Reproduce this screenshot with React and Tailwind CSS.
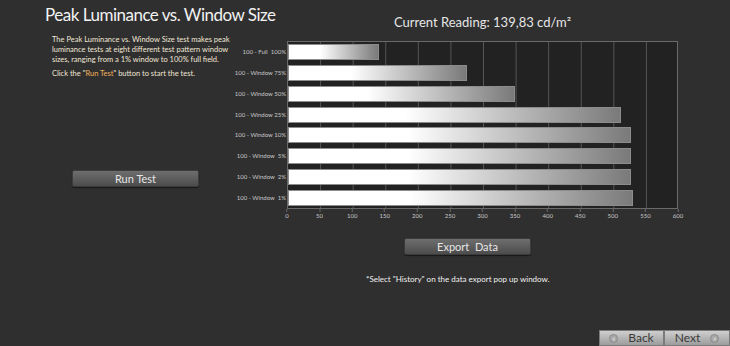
import React from 'react'

const rows = [
  { label: '100 - Full  100%', value: 139.83 },
  { label: '100 - Window 75%', value: 275 },
  { label: '100 - Window 50%', value: 349 },
  { label: '100 - Window 25%', value: 511 },
  { label: '100 - Window 10%', value: 526 },
  { label: '100 - Window  5%', value: 527 },
  { label: '100 - Window  2%', value: 526 },
  { label: '100 - Window  1%', value: 529 },
]

const ticks = [0, 50, 100, 150, 200, 250, 300, 350, 400, 450, 500, 550, 600]

const PLOT_W = 391

const Chart = () => (
  <div className="flex flex-col">
    <div className="flex">
      <div className="w-[47px] h-[167px] flex flex-col">
        {rows.map((r) => (
          <div key={r.label} className="flex-1 flex items-center justify-end whitespace-pre text-[6px] text-[#c8c8c8] pr-[1px]">
            {r.label}
          </div>
        ))}
      </div>
      <div className="relative w-[391px] h-[167px] bg-[#222222] border-l border-t border-r border-[#6a6a6a]">
        <svg className="absolute inset-0" width={PLOT_W} height={167}>
          {ticks.slice(1, -1).map((t) => (
            <line key={t} x1={(t / 600) * PLOT_W} x2={(t / 600) * PLOT_W} y1={0} y2={167} stroke="#555" strokeWidth="1" />
          ))}
        </svg>
        <div className="relative h-full flex flex-col">
          {rows.map((r) => (
            <div key={r.label} className="flex-1 flex items-center">
              <div
                className="h-[16px] border border-[#8c8c8c] bg-[linear-gradient(to_right,#ffffff_35%,#7a7a7a_100%)]"
                style={{ width: (r.value / 600) * PLOT_W }}
              />
            </div>
          ))}
        </div>
      </div>
    </div>
    <div className="flex">
      <div className="w-[47px]" />
      <div className="relative w-[391px] h-[14px] border-t border-[#6a6a6a]">
        {ticks.map((t) => (
          <div
            key={t}
            className="absolute top-0 flex flex-col items-center -translate-x-1/2"
            style={{ left: (t / 600) * PLOT_W }}
          >
            <div className="w-px h-[3px] bg-[#6a6a6a]" />
            <span className="text-[6px] leading-[8px] text-[#c8c8c8]">{t}</span>
          </div>
        ))}
      </div>
    </div>
  </div>
)

const GrayButton = ({ children, className }) => (
  <button className={`h-[17px] rounded-[2px] border border-[#3c3c3c] bg-[linear-gradient(to_bottom,#6e6e6e,#4c4c4c)] text-[#e6e6e6] text-[11px] leading-none shadow-[0_1px_1px_rgba(0,0,0,0.5)] ${className}`}>
    {children}
  </button>
)

const NavButton = ({ children }) => (
  <button className="h-[16px] flex items-center justify-center gap-[10px] border border-[#7a7a7a] bg-[linear-gradient(to_bottom,#cfcfcf,#9c9c9c)] text-[#3a3a3a] text-[12px] leading-none">
    {children}
  </button>
)

const Circle = ({ glyph }) => (
  <span className="w-[9px] h-[9px] rounded-full bg-[#a8a8a8] border border-[#8a8a8a] flex items-center justify-center text-[7px] leading-none text-[#e8e8e8]">
    {glyph}
  </span>
)

export default function App() {
  return (
    <div className="w-[730px] h-[346px] bg-[#2f2f2f] flex flex-col overflow-hidden font-['Lato','Liberation_Sans',sans-serif]">
      <div className="flex flex-1">
        <div className="w-[240px] shrink-0 flex flex-col">
          <h1 className="pl-[45px] pt-[4px] text-[17px] leading-[22px] tracking-[-0.5px] text-[#f2f2f2] whitespace-nowrap">
            Peak Luminance vs. Window Size
          </h1>
          <div className="ml-[52px] w-[180px] mt-[9px] text-[7.5px] leading-[9.8px] text-[#efe6d6]">
            <p>
              The Peak Luminance vs. Window Size test makes peak luminance tests at eight different test pattern window sizes, ranging from a 1% window to 100% full field.
            </p>
            <p className="mt-[5px]">
              Click the "<span className="text-[#f0b25c]">Run Test</span>" button to start the test.
            </p>
          </div>
          <div className="pl-[72px] mt-[86px]">
            <GrayButton className="w-[127px]">Run Test</GrayButton>
          </div>
        </div>
        <div className="flex flex-col">
          <div className="pl-[47px] w-[438px] text-center pt-[14px] text-[13px] leading-[16px] text-[#e6e6e6]">
            Current Reading: 139,83 cd/m²
          </div>
          <div className="mt-[11px]">
            <Chart />
          </div>
          <div className="pl-[164px] mt-[11px]">
            <GrayButton className="w-[127px]">Export&nbsp; Data</GrayButton>
          </div>
          <div className="pl-[126px] mt-[17px] text-[8px] leading-[10px] text-[#f0f0f0]">
            *Select "History" on the data export pop up window.
          </div>
        </div>
      </div>
      <div className="flex justify-end">
        <div className="grid grid-cols-[65px_66px]">
          <NavButton>
            <Circle glyph="«" />
            <span>Back</span>
          </NavButton>
          <NavButton>
            <span>Next</span>
            <Circle glyph="»" />
          </NavButton>
        </div>
      </div>
    </div>
  )
}
